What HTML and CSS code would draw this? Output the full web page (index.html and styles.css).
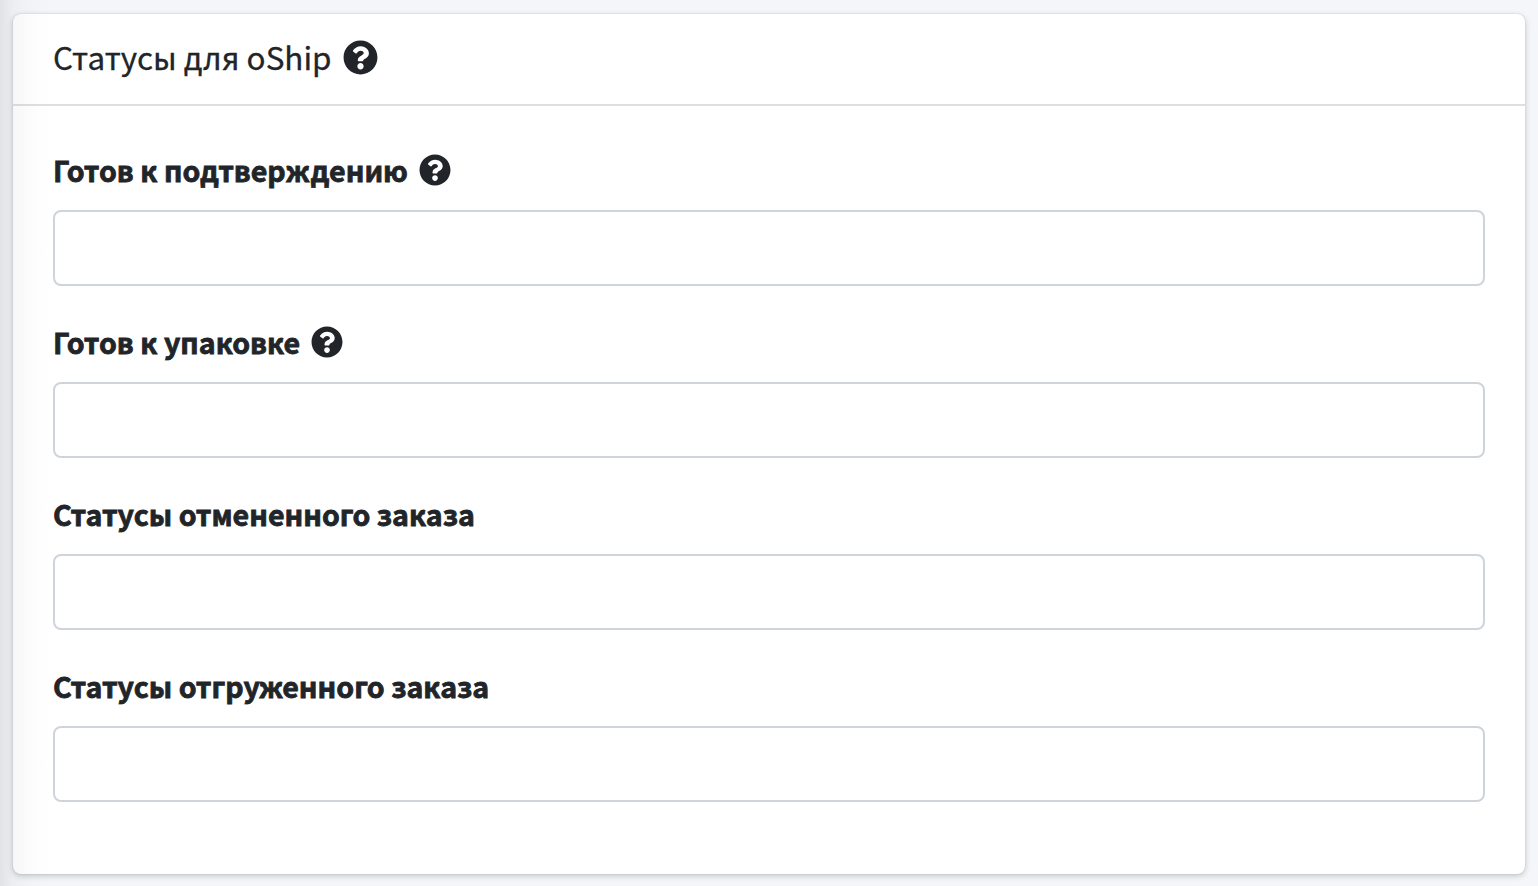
FILE: index.html
```html
<!DOCTYPE html>
<html lang="ru">
<head>
  <meta charset="UTF-8">
  <title>Статусы для oShip</title>
  <link rel="stylesheet" href="styles.css">
</head>
<body>
  <svg width="0" height="0" class="sprite">
    <symbol id="help" viewBox="0 0 512 512">
      <path fill="currentColor" d="M504 256c0 136.997-111.043 248-248 248S8 392.997 8 256C8 119.083 119.043 8 256 8s248 111.083 248 248zM262.655 90c-54.497 0-89.255 22.957-116.549 63.758-3.536 5.286-2.353 12.415 2.715 16.258l34.699 26.31c5.205 3.947 12.621 3.008 16.665-2.122 17.864-22.658 30.113-35.797 57.303-35.797 20.429 0 45.698 13.148 45.698 32.958 0 14.976-12.363 22.667-32.534 33.976C247.128 238.528 216 254.941 216 296v4c0 6.627 5.373 12 12 12h56c6.627 0 12-5.373 12-12v-1.333c0-28.462 83.186-29.647 83.186-106.667 0-58.002-60.165-102-116.531-102zM256 338c-25.365 0-46 20.635-46 46 0 25.364 20.635 46 46 46s46-20.636 46-46c0-25.365-20.635-46-46-46z"/>
    </symbol>
  </svg>

  <div class="card">
    <div class="card-header">
      <h3 class="card-title">Статусы для oShip</h3>
      <svg class="icon"><use href="#help"/></svg>
    </div>
    <div class="card-body">
      <div class="form-group">
        <div class="label-row">
          <label for="confirm">Готов к подтверждению</label>
          <svg class="icon"><use href="#help"/></svg>
        </div>
        <input type="text" id="confirm" class="form-control">
      </div>
      <div class="form-group">
        <div class="label-row">
          <label for="pack">Готов к упаковке</label>
          <svg class="icon"><use href="#help"/></svg>
        </div>
        <input type="text" id="pack" class="form-control">
      </div>
      <div class="form-group">
        <div class="label-row">
          <label for="cancelled">Статусы отмененного заказа</label>
        </div>
        <input type="text" id="cancelled" class="form-control">
      </div>
      <div class="form-group">
        <div class="label-row">
          <label for="shipped">Статусы отгруженного заказа</label>
        </div>
        <input type="text" id="shipped" class="form-control">
      </div>
    </div>
  </div>

  <div class="sidebar-shadow"></div>
</body>
</html>
```

FILE: styles.css
```css
* {
  box-sizing: border-box;
}

body {
  position: relative;
  margin: 0;
  padding: 14px 13px 12px;
  height: 886px;
  overflow: hidden;
  background: #f4f6fa;
  color: #212529;
  font-family: "Source Sans Pro", "Noto Sans CJK SC", "Noto Sans", sans-serif;
}

.sprite {
  display: block;
  position: absolute;
}

.card {
  height: 860px;
  background: #fff;
  border-radius: 8px;
  box-shadow: 0 0 2px rgba(0, 0, 0, .13), 0 2px 6px rgba(0, 0, 0, .2);
}

.card-header {
  display: flex;
  align-items: center;
  height: 92px;
  padding: 0 40px 4px;
  border-bottom: 2px solid #dfdfdf;
}

.card-title {
  margin: 0;
  padding-bottom: 2px;
  font-size: 31.4px;
  font-weight: 400;
  -webkit-text-stroke: .3px #212529;
}

.card-header .icon {
  width: 35px;
  height: 35px;
  margin-left: 11.5px;
}

.card-body {
  padding: 40px;
}

.form-group {
  margin-bottom: 32px;
}

.label-row {
  display: flex;
  align-items: center;
  height: 48px;
  margin-bottom: 16px;
}

.label-row label {
  padding-bottom: 2px;
  font-size: 28.57px;
  font-weight: 700;
  -webkit-text-stroke: .8px #212529;
}

.label-row .icon {
  width: 32px;
  height: 32px;
  margin-left: 10.8px;
}

.form-control {
  display: block;
  width: 100%;
  height: 76px;
  border: 2px solid #ced4da;
  border-radius: 8px;
  background: #fff;
}

/* shadow cast by the sidebar on the left */
.sidebar-shadow {
  position: absolute;
  top: 0;
  left: 0;
  width: 52px;
  height: 100%;
  background: linear-gradient(to right, rgba(0, 0, 0, .08), rgba(0, 0, 0, .03) 26%, rgba(0, 0, 0, .01) 58%, transparent);
  pointer-events: none;
}
```
